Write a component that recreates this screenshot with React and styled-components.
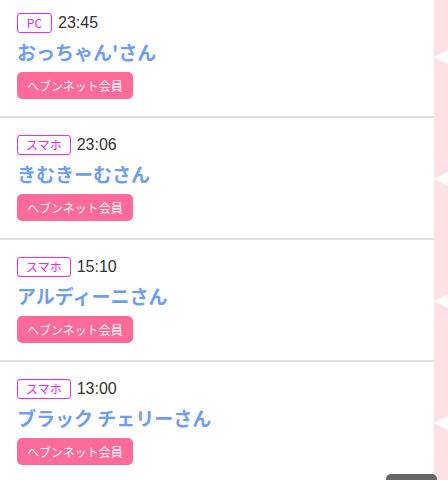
import styled, { createGlobalStyle } from "styled-components";

const GlobalStyle = createGlobalStyle`
  html, body {
    margin: 0;
    padding: 0;
    overflow: hidden;
    background: #fff;
  }
  body {
    font-family: "Noto Sans CJK JP", "Noto Sans", "Liberation Sans", sans-serif;
  }
`;

const visits = [
  { device: "PC", time: "23:45", name: "おっちゃん'さん" },
  { device: "スマホ", time: "23:06", name: "きむきーむさん" },
  { device: "スマホ", time: "15:10", name: "アルディーニさん" },
  { device: "スマホ", time: "13:00", name: "ブラック チェリーさん" },
];

function App() {
  return (
    <>
      <GlobalStyle />
      <ListStyled>
        {visits.map((v) => (
          <Row key={v.time}>
            <Content>
              <Meta>
                <DeviceBadge>{v.device}</DeviceBadge>
                <Time>{v.time}</Time>
              </Meta>
              <Name>{v.name}</Name>
              <MemberButton>ヘブンネット会員</MemberButton>
            </Content>
            <Side />
          </Row>
        ))}
      </ListStyled>
      <PageTop />
    </>
  );
}

const ListStyled = styled.ul`
  list-style: none;
  margin: -4px 0 0;
  padding: 0;
`;

const Row = styled.li`
  display: flex;
  height: 122px;
`;

const Content = styled.div`
  flex: 1;
  display: flex;
  flex-direction: column;
  align-items: flex-start;
  padding: 17px 17px 0;
  border-bottom: 2px solid #dedede;
  box-sizing: border-box;
`;

const Meta = styled.div`
  display: flex;
  align-items: center;
  gap: 6px;
  height: 20px;
`;

const DeviceBadge = styled.span`
  display: inline-flex;
  align-items: center;
  justify-content: center;
  box-sizing: border-box;
  min-width: 35px;
  height: 20px;
  padding: 0 8px;
  border: 1px solid #e62ee6;
  border-radius: 3px;
  color: #e62ee6;
  font-size: 12px;
  line-height: 1;
`;

const Time = styled.span`
  color: #333;
  font-family: "Liberation Sans", "Noto Sans CJK JP", sans-serif;
  font-size: 16px;
`;

const Name = styled.div`
  margin: 5px 0 7px;
  color: #6d9ef2;
  font-size: 19px;
  font-weight: bold;
  line-height: 27px;
`;

const MemberButton = styled.span`
  display: inline-flex;
  align-items: center;
  height: 27px;
  padding: 0 10px;
  border-radius: 5px;
  background: #ff6b98;
  color: #fff5f8;
  font-size: 12px;
`;

const Side = styled.div`
  position: relative;
  width: 14px;
  flex-shrink: 0;
  background: #ffe0e3;

  &::before {
    content: "";
    position: absolute;
    left: 0;
    top: 50%;
    transform: translateY(-50%);
    border-top: 7px solid transparent;
    border-bottom: 7px solid transparent;
    border-right: 14px solid #fff;
  }
`;

const PageTop = styled.div`
  position: fixed;
  right: 11px;
  bottom: -30px;
  width: 51px;
  height: 36px;
  border-radius: 5px;
  background: #666;
`;

export default App;
